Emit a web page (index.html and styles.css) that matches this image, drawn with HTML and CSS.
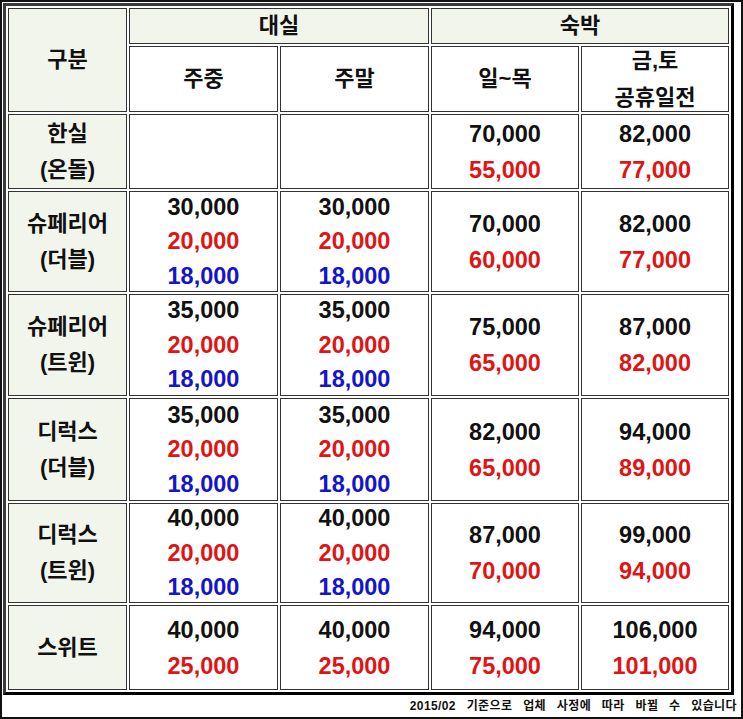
FILE: index.html
```html
<!DOCTYPE html>
<html lang="ko">
<head>
<meta charset="utf-8">
<title>객실 요금표</title>
<link rel="stylesheet" href="styles.css">
</head>
<body>
<div class="frame">
  <table class="rates">
    <colgroup>
      <col class="c1"><col class="c2"><col class="c3"><col class="c4"><col class="c5">
    </colgroup>
    <tr class="h1">
      <td rowspan="2" class="lab"><div class="s1">구분</div></td>
      <td colspan="2" class="lab"><div class="s1">대실</div></td>
      <td colspan="2" class="lab"><div class="s1">숙박</div></td>
    </tr>
    <tr class="h2">
      <td><div class="s1">주중</div></td>
      <td><div class="s1">주말</div></td>
      <td><div class="s1">일~목</div></td>
      <td><div class="s2 tight"><div>금,토</div><div>공휴일전</div></div></td>
    </tr>
    <tr class="r2">
      <td class="lab"><div class="s2"><div>한실</div><div>(온돌)</div></div></td>
      <td></td>
      <td></td>
      <td><div class="s2"><div>70,000</div><div class="red">55,000</div></div></td>
      <td><div class="s2"><div>82,000</div><div class="red">77,000</div></div></td>
    </tr>
    <tr class="r3a">
      <td class="lab"><div class="s2"><div>슈페리어</div><div>(더블)</div></div></td>
      <td><div class="s3"><div>30,000</div><div class="red">20,000</div><div class="blue">18,000</div></div></td>
      <td><div class="s3"><div>30,000</div><div class="red">20,000</div><div class="blue">18,000</div></div></td>
      <td><div class="s2"><div>70,000</div><div class="red">60,000</div></div></td>
      <td><div class="s2"><div>82,000</div><div class="red">77,000</div></div></td>
    </tr>
    <tr class="r3b">
      <td class="lab"><div class="s2"><div>슈페리어</div><div>(트윈)</div></div></td>
      <td><div class="s3"><div>35,000</div><div class="red">20,000</div><div class="blue">18,000</div></div></td>
      <td><div class="s3"><div>35,000</div><div class="red">20,000</div><div class="blue">18,000</div></div></td>
      <td><div class="s2"><div>75,000</div><div class="red">65,000</div></div></td>
      <td><div class="s2"><div>87,000</div><div class="red">82,000</div></div></td>
    </tr>
    <tr class="r3c">
      <td class="lab"><div class="s2"><div>디럭스</div><div>(더블)</div></div></td>
      <td><div class="s3"><div>35,000</div><div class="red">20,000</div><div class="blue">18,000</div></div></td>
      <td><div class="s3"><div>35,000</div><div class="red">20,000</div><div class="blue">18,000</div></div></td>
      <td><div class="s2"><div>82,000</div><div class="red">65,000</div></div></td>
      <td><div class="s2"><div>94,000</div><div class="red">89,000</div></div></td>
    </tr>
    <tr class="r3d">
      <td class="lab"><div class="s2"><div>디럭스</div><div>(트윈)</div></div></td>
      <td><div class="s3"><div>40,000</div><div class="red">20,000</div><div class="blue">18,000</div></div></td>
      <td><div class="s3"><div>40,000</div><div class="red">20,000</div><div class="blue">18,000</div></div></td>
      <td><div class="s2"><div>87,000</div><div class="red">70,000</div></div></td>
      <td><div class="s2"><div>99,000</div><div class="red">94,000</div></div></td>
    </tr>
    <tr class="rs">
      <td class="lab"><div class="s1">스위트</div></td>
      <td><div class="s2"><div>40,000</div><div class="red">25,000</div></div></td>
      <td><div class="s2"><div>40,000</div><div class="red">25,000</div></div></td>
      <td><div class="s2"><div>94,000</div><div class="red">75,000</div></div></td>
      <td><div class="s2"><div>106,000</div><div class="red">101,000</div></div></td>
    </tr>
  </table>
  <div class="note">2015/02 기준으로 업체 사정에 따라 바뀔 수 있습니다</div>
</div>
</body>
</html>
```
FILE: styles.css
```css
html, body {
  margin: 0;
  padding: 0;
  background: #ffffff;
}

.frame {
  box-sizing: border-box;
  width: 743px;
  height: 719px;
  border: 2px solid #111111;
  padding: 1px 0 0 1px;
  font-family: "Liberation Sans", "Noto Sans CJK KR", sans-serif;
  font-weight: 700;
  color: #111111;
}

.rates {
  width: 731px;
  table-layout: fixed;
  border-collapse: separate;
  border-spacing: 2px;
  border-style: solid;
  border-width: 3px;
  border-color: #3a3a3a #000000 #000000 #3a3a3a;
  font-size: 23.5px;
}

.rates col.c1 { width: 119px; }
.rates col.c2 { width: 149px; }
.rates col.c3 { width: 149px; }
.rates col.c4 { width: 148px; }
.rates col.c5 { width: 148px; }

.rates td {
  box-sizing: border-box;
  border: 1px solid #333333;
  padding: 0;
  text-align: center;
  vertical-align: middle;
  background: #ffffff;
  line-height: 20px;
  white-space: nowrap;
}

.rates td.lab {
  background: #f2f5ec;
  font-size: 22px;
}

.rates .h1 td { height: 36px; font-size: 22px; }
.rates .h2 td { height: 66px; font-size: 22px; }
.rates .r2 td { height: 75px; }
.rates .r3a td { height: 101px; }
.rates .r3b td { height: 102px; }
.rates .r3c td { height: 103px; }
.rates .r3d td { height: 100px; }
.rates .rs td { height: 85px; }

.s1 {
  height: 30px;
  line-height: 30px;
  overflow: visible;
}

.s2 > div {
  height: 36px;
  line-height: 36px;
  overflow: visible;
}

.s2.tight {
  margin: -6px 0;
}

.s2.tight > div {
  height: 37px;
  line-height: 37px;
}

.s3 {
  margin: -3px 0;
}

.s3 > div {
  height: 34.5px;
  line-height: 34.5px;
  overflow: visible;
}

.red { color: #e01414; }
.blue { color: #1414c8; }

.note {
  height: 23px;
  line-height: 23px;
  padding-right: 4px;
  text-align: right;
  font-size: 12px;
  letter-spacing: 0.4px;
  word-spacing: 7px;
  color: #111111;
  overflow: hidden;
}
```
